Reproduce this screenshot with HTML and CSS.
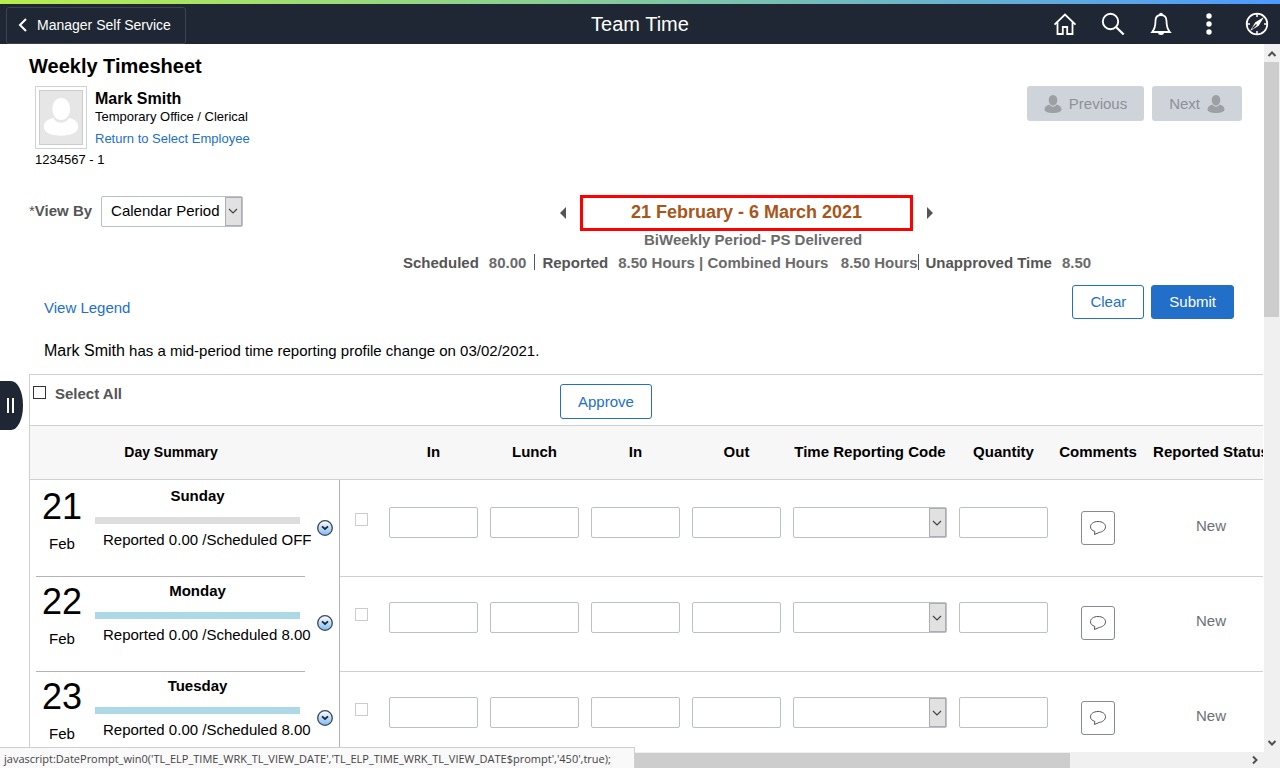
FILE: index.html
```html
<!DOCTYPE html>
<html lang="en">
<head>
<meta charset="utf-8">
<title>Team Time</title>
<link rel="stylesheet" href="styles.css">
</head>
<body>
<svg class="defs" aria-hidden="true">
  <defs>
    <linearGradient id="ball" x1="0" y1="0" x2="0" y2="1"><stop offset="0" stop-color="#ffffff"/><stop offset="1" stop-color="#7cbcf5"/></linearGradient>
    <symbol id="person" viewBox="0 0 18 20"><path d="M9 1c2.700 0 4.300 2.200 4.300 5S11.600 11.500 9 11.500 4.700 8.800 4.700 6 6.300 1 9 1z"/><path d="M5.500 10.500c1 1.500 2.400 2.200 3.500 2.200s2.500-.7 3.500-2.200c3 .6 5 2.500 5 4.800 0 2.600-3.500 3.700-8.500 3.700S.5 17.900.5 15.300C.5 13 2.500 11.100 5.500 10.500z"/></symbol>
    <symbol id="chev" viewBox="0 0 10 6"><path d="M1 1l4 4 4-4" fill="none" stroke="#444" stroke-width="1.200"/></symbol>
    <symbol id="expand" viewBox="0 0 16 16"><circle cx="8" cy="8" r="7.300" fill="url(#ball)" stroke="#3d4450" stroke-width="1.300"/><path d="M5 6.300l3 2.700 3-2.700" fill="none" stroke="#1c2733" stroke-width="1.800"/></symbol>
    <symbol id="bubble" viewBox="0 0 18 16"><path d="M9 1.500c4.400 0 7.500 2.200 7.500 5.300S13.400 12 10.300 12.400L5.500 14.500l.3-3.100C3 10.500 1.500 8.900 1.500 6.800 1.500 3.700 4.600 1.500 9 1.500z" fill="none" stroke="#555" stroke-width="1"/></symbol>
  </defs>
</svg>
<header class="topbar">
  <button class="back"><svg viewBox="0 0 10 16" width="10" height="16"><path d="M8 2L2 8l6 6" fill="none" stroke="#fff" stroke-width="2"/></svg>Manager Self Service</button>
  <h1 class="title">Team Time</h1>
  <nav class="tools">
    <button aria-label="Home"><svg viewBox="0 0 24 24"><path d="M1.500 12.700L12 2.500l10.500 10.200M4.500 10.500v11.500h5.300v-7h4.400v7h5.300V10.500" fill="none" stroke="#fff" stroke-width="1.800"/></svg></button>
    <button aria-label="Search"><svg viewBox="0 0 24 24"><circle cx="9.500" cy="9.500" r="7.700" fill="none" stroke="#fff" stroke-width="1.900"/><path d="M15 15l7.700 7.500" stroke="#fff" stroke-width="2.200"/></svg></button>
    <button aria-label="Notifications"><svg viewBox="0 0 24 24"><path d="M12 3c-3.600 0-5.500 2.500-5.500 6 0 5.500-.8 8-3.300 11h17.600c-2.500-3-3.300-5.500-3.300-11 0-3.500-1.900-6-5.500-6z" fill="none" stroke="#fff" stroke-width="1.800"/><path d="M10 2.800a2 2 0 014 0zM9 20.500h6a3 2.500 0 01-6 0z" fill="#fff"/></svg></button>
    <button aria-label="Actions"><svg viewBox="0 0 24 24" fill="#fff"><circle cx="12" cy="4" r="2.700"/><circle cx="12" cy="12" r="2.700"/><circle cx="12" cy="20" r="2.700"/></svg></button>
    <button aria-label="Navigator"><svg viewBox="0 0 24 24"><circle cx="12" cy="12" r="10.300" fill="none" stroke="#fff" stroke-width="1.700"/><path d="M19 5l-5.300 8.700L5 19l5.300-8.700z" fill="#fff"/><path d="M11.500 12.500L7.500 16.500" stroke="#1e2733" stroke-width="1.200"/><path d="M12 2v3M12 19v3M2 12h3M19 12h3" stroke="#fff" stroke-width="1.500"/></svg></button>
  </nav>
</header>
<div class="viewport">
  <main class="content">
    <h2 class="heading">Weekly Timesheet</h2>
    <section class="employee">
      <div class="photo"><svg viewBox="0 0 44 55" width="44" height="55"><path d="M22 7c5.500 0 9.500 5 9.500 11.500S27.500 30 22 30s-9-5-9-11.500 3.500-11.500 9-11.500z" fill="#fff"/><path d="M14 28c2 3.500 5 5 8 5s6.500-1.500 8.500-5c6 1 9.500 4.500 9.500 9 0 7-8 9.500-18 9.500S4 44 4 37c0-4.500 4-8 10-9z" fill="#fff"/></svg></div>
      <div class="who">
        <strong class="name">Mark Smith</strong>
        <span>Temporary Office / Clerical</span>
        <a href="#select">Return to Select Employee</a>
      </div>
      <div class="pager">
        <button disabled><svg width="18" height="20"><use href="#person"/></svg>Previous</button>
        <button disabled>Next<svg width="18" height="20"><use href="#person"/></svg></button>
      </div>
    </section>
    <div class="empid">1234567 - 1</div>
    <section class="filter">
      <div class="viewby">
        <label for="viewby"><span class="star">*</span>View By</label>
        <span class="pick"><select id="viewby"><option>Calendar Period</option></select><svg class="drop"><use href="#chev" x="3" y="11" width="10" height="6"/></svg></span>
      </div>
      <div class="period">
        <div class="range">
          <button class="step" aria-label="Previous period"><svg width="6" height="12"><path d="M6 0v12L0 6z" fill="#555"/></svg></button>
          <a class="date" href="#date">21 February - 6 March 2021</a>
          <button class="step" aria-label="Next period"><svg width="6" height="12"><path d="M0 0v12l6-6z" fill="#555"/></svg></button>
        </div>
        <div class="kind">BiWeekly Period- PS Delivered</div>
      </div>
    </section>
    <div class="totals">
      <div class="total"><b>Scheduled</b><span>80.00</span></div>
      <div class="total tight"><b>Reported</b><span>8.50 Hours | Combined Hours &nbsp; 8.50 Hours</span></div>
      <div class="total"><b>Unapproved Time</b><span>8.50</span></div>
    </div>
    <div class="actions">
      <a href="#legend">View Legend</a>
      <button class="btn">Clear</button>
      <button class="btn primary">Submit</button>
    </div>
    <p class="notice"><span class="person">Mark Smith</span> has a mid-period time reporting profile change on 03/02/2021.</p>
    <section class="sheet">
      <div class="sheetbar">
        <label class="all"><input type="checkbox">Select All</label>
        <button class="btn">Approve</button>
      </div>
      <table>
        <colgroup><col class="c-day"><col class="c-check"><col class="c-time"><col class="c-time"><col class="c-time"><col class="c-time"><col class="c-code"><col class="c-time"><col class="c-note"><col class="c-status"></colgroup>
        <thead><tr><th class="summary">Day Summary</th><th></th><th>In</th><th>Lunch</th><th>In</th><th>Out</th><th>Time Reporting Code</th><th>Quantity</th><th>Comments</th><th>Reported Status</th></tr></thead>
        <tbody>
          <tr>
            <td class="daycell"><div class="day"><div class="when"><span class="num">21</span><span class="mon">Feb</span></div><div class="info"><b>Sunday</b><i class="bar off"></i><span>Reported 0.00 /Scheduled OFF</span></div><button class="expand" aria-label="Sunday details"><svg width="16" height="16"><use href="#expand"/></svg></button></div></td>
            <td class="tick"><input type="checkbox" aria-label="Select Sunday"></td>
            <td><input class="box" aria-label="In"></td><td><input class="box" aria-label="Lunch"></td><td><input class="box" aria-label="In again"></td><td><input class="box" aria-label="Out"></td>
            <td><span class="pick wide"><select aria-label="Time Reporting Code"><option></option></select><svg class="drop"><use href="#chev" x="3" y="12" width="10" height="6"/></svg></span></td>
            <td><input class="box" aria-label="Quantity"></td>
            <td class="note"><button aria-label="Comments"><svg width="18" height="16"><use href="#bubble"/></svg></button></td><td class="status">New</td>
          </tr>
          <tr>
            <td class="daycell"><div class="day"><div class="when"><span class="num">22</span><span class="mon">Feb</span></div><div class="info"><b>Monday</b><i class="bar"></i><span>Reported 0.00 /Scheduled 8.00</span></div><button class="expand" aria-label="Monday details"><svg width="16" height="16"><use href="#expand"/></svg></button></div></td>
            <td class="tick"><input type="checkbox" aria-label="Select Monday"></td>
            <td><input class="box" aria-label="In"></td><td><input class="box" aria-label="Lunch"></td><td><input class="box" aria-label="In again"></td><td><input class="box" aria-label="Out"></td>
            <td><span class="pick wide"><select aria-label="Time Reporting Code"><option></option></select><svg class="drop"><use href="#chev" x="3" y="12" width="10" height="6"/></svg></span></td>
            <td><input class="box" aria-label="Quantity"></td>
            <td class="note"><button aria-label="Comments"><svg width="18" height="16"><use href="#bubble"/></svg></button></td><td class="status">New</td>
          </tr>
          <tr>
            <td class="daycell"><div class="day"><div class="when"><span class="num">23</span><span class="mon">Feb</span></div><div class="info"><b>Tuesday</b><i class="bar"></i><span>Reported 0.00 /Scheduled 8.00</span></div><button class="expand" aria-label="Tuesday details"><svg width="16" height="16"><use href="#expand"/></svg></button></div></td>
            <td class="tick"><input type="checkbox" aria-label="Select Tuesday"></td>
            <td><input class="box" aria-label="In"></td><td><input class="box" aria-label="Lunch"></td><td><input class="box" aria-label="In again"></td><td><input class="box" aria-label="Out"></td>
            <td><span class="pick wide"><select aria-label="Time Reporting Code"><option></option></select><svg class="drop"><use href="#chev" x="3" y="12" width="10" height="6"/></svg></span></td>
            <td><input class="box" aria-label="Quantity"></td>
            <td class="note"><button aria-label="Comments"><svg width="18" height="16"><use href="#bubble"/></svg></button></td><td class="status">New</td>
          </tr>
        </tbody>
      </table>
    </section>
  </main>
  <div class="vscroll" aria-hidden="true">
    <svg width="16" height="18"><path d="M4.500 12L8 8.500l3.500 3.500" fill="none" stroke="#505050" stroke-width="2"/></svg>
    <div class="thumb"></div>
    <svg width="16" height="18"><path d="M4.500 7L8 10.500 11.500 7" fill="none" stroke="#505050" stroke-width="2"/></svg>
  </div>
  <div class="hscroll" aria-hidden="true"><div class="thumb"></div><svg width="16" height="16"><path d="M6 4.500L9.500 8 6 11.500" fill="none" stroke="#505050" stroke-width="2"/></svg></div>
  <div class="corner"></div>
</div>
<button class="drawer" aria-label="Open side panel"><i></i><i></i></button>
<div class="statusbar">javascript:DatePrompt_win0('TL_ELP_TIME_WRK_TL_VIEW_DATE','TL_ELP_TIME_WRK_TL_VIEW_DATE$prompt','450',true);</div>
</body>
</html>
```
FILE: styles.css
```css
* { box-sizing: border-box; }
body { margin: 0; height: 100vh; overflow: hidden; display: flex; flex-direction: column; position: relative; font: 15px/18px "Liberation Sans", Arial, sans-serif; color: #000; background: #fff; }
button, input, select { font: inherit; margin: 0; }
button { cursor: pointer; }
svg { display: block; }
a { color: #226fca; text-decoration: none; }
.defs { position: absolute; width: 0; height: 0; }

.topbar { flex: none; height: 44px; display: grid; grid-template-columns: 1fr auto 1fr; align-items: center; padding: 4px 11px 0; color: #fff; background: linear-gradient(90deg, #b7ee4b, #82c9a0 50%, #4c9aff) top / 100% 4px no-repeat, #1e2733; }
.back { justify-self: start; display: flex; align-items: center; gap: 9px; height: 37px; margin: 2px 0 0 -5px; padding: 0 14px 0 11px; border: 1px solid #3b4450; border-radius: 3px; background: none; color: #fff; font-size: 14px; }
.title { margin: 0; font-size: 20px; line-height: 24px; font-weight: 400; }
.tools { justify-self: end; display: flex; gap: 24px; }
.tools button { padding: 0; border: 0; background: none; }
.tools svg { width: 24px; height: 24px; }

.viewport { flex: 1; min-height: 0; display: grid; grid-template: minmax(0, 1fr) 16px / minmax(0, 1fr) 17px; }
.content { overflow: hidden; padding: 10px 0 0 29px; }
.heading { margin: 0; font-size: 20px; line-height: 24px; }
.employee { display: flex; align-items: flex-start; margin-top: 8px; padding: 0 21px 0 6px; }
.photo { flex: none; padding: 3px; border: 1px solid #ccd3dc; }
.photo svg { background: #e6e6e6; border: 1px solid #ccc; }
.who { flex: 1; margin-left: 8px; display: flex; flex-direction: column; align-items: flex-start; font-size: 13px; padding-top: 4px; }
.who a { margin-top: 4px; }
.name { font-size: 16px; }
.pager { display: flex; gap: 8px; }
.pager button { display: flex; align-items: center; gap: 7px; height: 35px; padding: 0 17px; border: 0; border-radius: 3px; background: #cfd4db; color: #8b9199; cursor: default; }
.pager svg { fill: #9ca0a5; }
.empid { font-size: 13px; margin: 2px 0 0 6px; }

.filter { display: grid; grid-template-columns: 531px 1fr; margin-top: 26px; }
.viewby { display: flex; gap: 9px; align-items: center; height: 32px; }
.viewby label { font-weight: 700; color: #555; }
.star { font-weight: 400; }
.pick { position: relative; display: inline-block; width: 142px; height: 31px; vertical-align: top; }
.pick select { appearance: none; width: 100%; height: 100%; padding: 0 18px 0 9px; border: 1px solid #b9c1cc; border-radius: 2px; background: #fff; color: #000; }
.drop { position: absolute; top: 1px; right: 1px; width: 17px; height: 29px; background: #e1e1e1; border: 1px solid #adadad; pointer-events: none; }
.drop use { transform: translate(-1px, -1px); }
.period { display: grid; justify-items: start; }
.range { display: flex; align-items: center; gap: 14px; }
.step { padding: 0; border: 0; background: none; }
.date { width: 333px; height: 36px; border: 3px solid #f00; color: #a8561a; font-size: 18px; line-height: 28px; font-weight: 700; text-align: center; }
.kind { margin-left: 84px; color: #6b6b6b; font-weight: 700; }
.totals { display: flex; gap: 8px; margin: 5px 0 0 374px; font-weight: 700; white-space: nowrap; }
.total { display: flex; gap: 10px; color: #6b6b6b; }
.total b { color: #555; }
.total + .total { padding-left: 8px; background: linear-gradient(#555, #555) left top / 1px 16px no-repeat; }
.tight { margin-right: -8px; }

.actions { display: flex; gap: 7px; align-items: center; margin: 13px 29px 0 15px; }
.actions a { margin-right: auto; padding-top: 11px; }
.btn { height: 35px; padding: 0 17px; border: 1px solid #226fca; border-radius: 3px; background: #fff; color: #226fca; }
.actions .btn { height: 34px; }
.primary { background: #226fca; color: #fff; }
.notice { margin: 22px 0 0 15px; height: 20px; line-height: 20px; }
.person { font-size: 16px; }

.sheet { margin-top: 13px; border: solid #cdd0d5; border-width: 1px 0 0 1px; }
.sheetbar { height: 50px; display: grid; grid-template-columns: 530px auto 1fr; align-items: start; padding-top: 9px; }
.all { display: flex; gap: 9px; align-items: center; padding: 1px 0 0 3px; font-weight: 700; color: #555; }
.all input, .tick input { appearance: none; width: 13px; height: 13px; border: 1px solid #333; background: #fff; }
.all input { margin-top: -3px; }
.tick input { border-color: #ccc; display: block; margin: 6px auto 0; }
table { table-layout: fixed; width: 1250px; border-spacing: 0; }
.c-day { width: 310px; }
.c-check { width: 43px; }
.c-time { width: 101px; }
.c-code { width: 166px; }
.c-note { width: 88px; }
.c-status { width: 138px; }
th { height: 55px; padding: 0 0 2px; background: #f7f7f7; border: solid #cdd0d5; border-width: 1px 0; white-space: nowrap; }
.summary { padding-right: 28px; font-size: 14px; }
td { height: 95px; padding: 25px 6px 0; vertical-align: top; border-bottom: 1px solid #cdd0d5; }
tbody tr:first-child td { height: 97px; padding-top: 27px; }
tbody .daycell, tbody tr:first-child .daycell { padding: 0 0 0 6px; border-right: 1px solid #b4b4b4; border-bottom: 0; }
tbody tr:first-child .day { height: 97px; padding-top: 2px; }
.day { height: 95px; display: grid; grid-template-columns: 52px 215px 1fr; column-gap: 7px; width: 297px; background: linear-gradient(#b4b4b4, #b4b4b4) left bottom / 269px 1px no-repeat; }
.when { display: grid; align-content: start; justify-items: center; padding-top: 5px; }
.num { font-size: 36px; line-height: 40px; }
.mon { margin-top: 8px; }
.info { display: grid; align-content: start; padding-top: 5px; }
.info b { text-align: center; width: 205px; }
.bar { height: 7px; width: 205px; margin: 12px 0 7px; background: #add8e6; }
.off { background: #ddd; }
.info span { padding-left: 8px; white-space: nowrap; }
.expand { align-self: start; margin-top: 38px; padding: 0; border: 0; background: none; }
.box { display: block; width: 100%; height: 31px; border: 1px solid #b9c1cc; border-radius: 2px; padding: 0 6px; }
.wide { width: 100%; }
.note button { display: grid; place-items: center; width: 34px; height: 34px; margin: 4px auto 0; padding: 0; border: 1px solid #848b95; border-radius: 3px; background: #fff; }
.status { text-align: center; color: #6b7078; line-height: 38px; }

.vscroll { background: #f0f0f0; margin-left: 1px; display: flex; flex-direction: column; }
.vscroll .thumb { height: 36%; margin-right: 1px; background: #cdcdcd; }
.vscroll svg:last-child { margin-top: auto; }
.hscroll { background: #f0f0f0; display: flex; align-items: center; justify-content: space-between; }
.hscroll .thumb { width: 1070px; height: 15px; background: #cdcdcd; }
.corner { background: #f0f0f0; }
.drawer { position: absolute; left: 0; top: 381px; width: 23px; height: 49px; padding: 0 9px 0 7px; border: 0; border-radius: 0 12px 12px 0 / 0 24px 24px 0; background: #1e2733; display: flex; align-items: center; justify-content: space-between; }
.drawer i { width: 2px; height: 15px; background: #fff; }
.statusbar { position: absolute; left: 0; bottom: 0; min-width: 635px; height: 21px; padding: 0 4px; border: solid #d0d0d0; border-width: 1px 1px 0 0; background: #f9f9f9; color: #444; font: 11px/21px "Open Sans", sans-serif; white-space: nowrap; }
```
